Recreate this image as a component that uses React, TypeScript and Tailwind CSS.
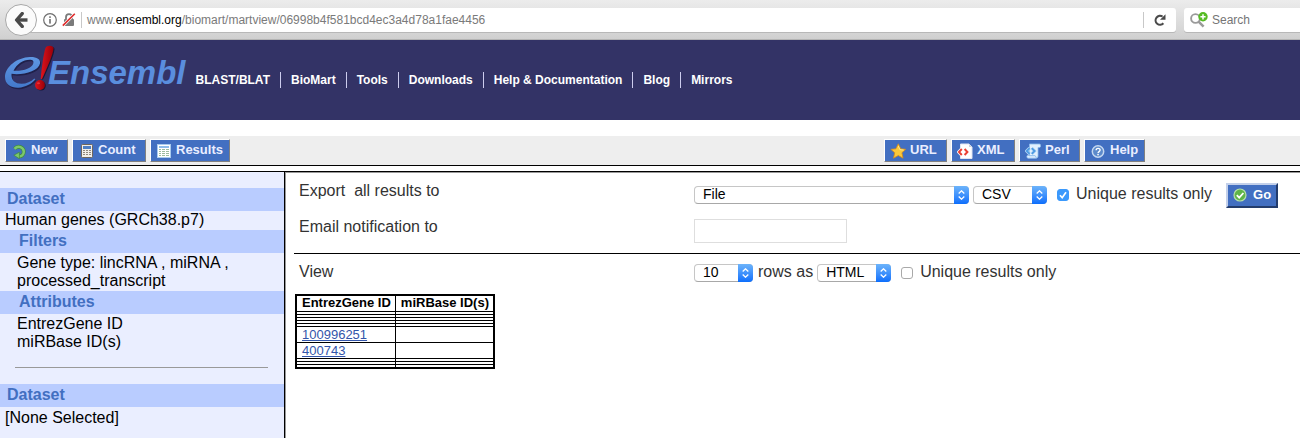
import type { ReactNode } from "react";

function BackIcon() {
  return (
    <svg width="14" height="16" viewBox="0 0 14 16" fill="none" stroke="#4a4a4a" strokeWidth="3.4" aria-hidden="true">
      <path d="M8.2 1.6 2.6 8l5.600 6.400" strokeLinejoin="round" strokeLinecap="round" />
      <path d="M3 8h10.500" />
    </svg>
  );
}

function InfoIcon() {
  return (
    <svg width="14" height="14" viewBox="0 0 14 14" fill="none" aria-hidden="true">
      <circle cx="7" cy="7" r="6.300" stroke="#6e6e6e" strokeWidth="1.200" />
      <rect x="6.200" y="6" width="1.600" height="4.600" fill="#6e6e6e" />
      <rect x="6.200" y="3.300" width="1.600" height="1.600" fill="#6e6e6e" />
    </svg>
  );
}

function LockOffIcon() {
  return (
    <svg width="14" height="14" viewBox="0 0 14 14" fill="none" aria-hidden="true">
      <rect x="2" y="6" width="10" height="7" rx="1" fill="#7b7b7b" />
      <path d="M4 6.500V4.200a3 3 0 0 1 6 0v2.300" stroke="#7b7b7b" strokeWidth="1.800" />
      <path d="M.8 12.600 12.800.8" stroke="#fff" strokeWidth="3" />
      <path d="M.8 12.600 12.800.8" stroke="#e02b2b" strokeWidth="1.600" />
    </svg>
  );
}

function ReloadIcon() {
  return (
    <svg width="12" height="12" viewBox="0 0 12 12" fill="none" aria-hidden="true">
      <path d="M9.400 9.300A4.500 4.500 0 1 1 8.600 2.500" stroke="#4a4a4a" strokeWidth="2.100" />
      <path d="M11.500.2v5.500H6z" fill="#4a4a4a" />
    </svg>
  );
}

function SearchPlusIcon() {
  return (
    <svg width="18" height="16" viewBox="0 0 18 16" fill="none" aria-hidden="true">
      <circle cx="5.500" cy="6.500" r="4.400" stroke="#9a9a9a" strokeWidth="1.900" />
      <path d="m8.600 9.600 5 5" stroke="#9a9a9a" strokeWidth="2.600" />
      <circle cx="13" cy="4.800" r="4.700" fill="#56bb23" />
      <path d="M13 2.200v5.200M10.400 4.800h5.200" stroke="#fff" strokeWidth="1.500" />
    </svg>
  );
}

const swoosh =
  "M6.500 28.800C18 30.500 33.500 26 35 18.500c.8-4.500-3.500-6.700-10-6.500C12 12.400 0 22 0 32c0 7.500 6 11 13.500 10.700 7-.3 13-3.700 16.800-8.400l-1-.8C26 36.600 21.500 38.800 16.500 38.800 10 38.800 6 35.500 6.500 28.800ZM8.500 25.800C11.500 19 18 14.800 24.500 14.700c3.500 0 4.600 1.500 3.700 4C26.800 23 18.500 26.400 8.500 25.800Z";

function EnsemblMark() {
  return (
    <svg width="50" height="48" viewBox="0 0 50 48" aria-hidden="true">
      <defs>
        <linearGradient id="eBlue" x1="0" y1="0" x2="0" y2="1">
          <stop offset="0" stopColor="#5f98e4" />
          <stop offset="1" stopColor="#4379cb" />
        </linearGradient>
        <linearGradient id="bangRed" x1="0" y1="0" x2="1" y2="0">
          <stop offset="0" stopColor="#e0141c" />
          <stop offset="1" stopColor="#98000a" />
        </linearGradient>
      </defs>
      <path fill="#20204a" transform="translate(1 1.500)" fillRule="evenodd" d={swoosh} />
      <path fill="url(#eBlue)" fillRule="evenodd" d={swoosh} />
      <path fill="#181838" d="M42 3.500c1-2.800 7.500-3 7.500.5 0 5-6.500 20-11.500 30.500h-1.500C37.500 24 39.500 9.500 42 3.500Z" />
      <path fill="url(#bangRed)" d="M40.500 3c1-3 8-3.200 8 .3 0 5-6.500 20-11.500 30.700h-1.300C36.500 23.500 38.500 9 40.500 3Z" />
      <circle cx="36" cy="40.800" r="4.800" fill="#181838" />
      <circle cx="35" cy="40" r="4.900" fill="url(#bangRed)" />
      <ellipse cx="33.500" cy="38.300" rx="1.500" ry="1" fill="#e8323a" />
    </svg>
  );
}

function NewIcon() {
  return (
    <svg width="16" height="16" viewBox="0 0 16 16" fill="none" aria-hidden="true">
      <path d="M3.500 5.800C7 2 12.800 4 12.800 8.800c0 3-2.300 4.600-4.800 4.600" stroke="#3f8a3c" strokeWidth="3.800" />
      <path d="M3.500 5.800C7 2 12.800 4 12.800 8.800c0 3-2.300 4.600-4.800 4.600" stroke="#7cc86c" strokeWidth="2.500" />
      <path d="M8.400 9.200v6.600L2.800 12.200z" fill="#7cc86c" stroke="#3f8a3c" strokeWidth=".7" />
    </svg>
  );
}

function CalculatorIcon() {
  return (
    <svg width="16" height="16" viewBox="0 0 16 16" aria-hidden="true">
      <rect x="3.500" y="1.500" width="11" height="13" rx="1" fill="#f1eee8" stroke="#6f665c" />
      <rect x="5" y="3" width="8" height="3" fill="#4e7fc4" />
      {[7, 9, 11].map((y) =>
        [5, 8, 11].map((x) => <rect key={`${x}-${y}`} x={x} y={y} width="2" height="1" fill="#8f877d" />),
      )}
    </svg>
  );
}

function TableIcon() {
  return (
    <svg width="16" height="16" viewBox="0 0 16 16" aria-hidden="true">
      <rect x="1.500" y="1.500" width="13" height="13" fill="#fff" stroke="#a9cbee" />
      <rect x="3" y="3" width="10" height="2" fill="#8fbdea" />
      {[6, 8, 10, 12].map((y) => (
        <g key={y} fill="#9dbb9f">
          <rect x="3" y={y} width="2" height="1" />
          <rect x="6" y={y} width="3" height="1" />
          <rect x="10" y={y} width="3" height="1" />
        </g>
      ))}
    </svg>
  );
}

function StarIcon() {
  return (
    <svg width="16" height="16" viewBox="0 0 16 16" aria-hidden="true">
      <path d="m8.300.8 2.400 5 5 .5-3.800 3.500 1.200 5.400-4.800-2.700L3.500 15.200l1.200-5.400L.8 6.300l5.100-.5z" fill="#fbc93a" stroke="#d58a1c" strokeWidth=".8" />
      <path d="m8.300 2.900 1.600 3.800 3.700.3" fill="none" stroke="#fff0a0" strokeWidth=".8" />
    </svg>
  );
}

function XmlIcon() {
  return (
    <svg width="16" height="16" viewBox="0 0 16 16" fill="none" aria-hidden="true">
      <path d="M3.500 1h8.500l3 3v11.500H3.500z" fill="#fff" stroke="#dfe5f2" />
      <path d="M12 1v3h3" fill="#c9d0dc" />
      <path d="M4.800 6 2 9l2.800 3M7.600 6l2.800 3-2.800 3" stroke="#fff" strokeWidth="3.500" />
      <path d="M4.800 6 2 9l2.800 3M7.600 6l2.800 3-2.800 3" stroke="#ea4035" strokeWidth="2" />
    </svg>
  );
}

function PerlIcon() {
  return (
    <svg width="16" height="16" viewBox="0 0 16 16" fill="none" aria-hidden="true">
      <path d="M4.500 1h10c1.500 0 1.500 3.500 0 3.500H13V13c0 1.500-1 2.200-2 2.200H3c-1.500 0-1.500-3 0-3h1.500z" fill="#e3f0fd" stroke="#8dbdec" strokeWidth=".8" />
      <path d="M4 12.700h6c1 0 .5 2 1.500 2" stroke="#8dbdec" />
      <path d="M4.600 5.200 1.800 8l2.800 2.800M6.800 5.200 9.600 8l-2.800 2.800" stroke="#bcdcf8" strokeWidth="3.200" />
      <path d="M4.600 5.200 1.800 8l2.800 2.800M6.800 5.200 9.600 8l-2.800 2.800" stroke="#4f9be2" strokeWidth="1.900" />
    </svg>
  );
}

function HelpIcon() {
  return (
    <svg width="16" height="16" viewBox="0 0 16 16" fill="none" aria-hidden="true">
      <circle cx="8" cy="8.500" r="5.700" fill="#5c8acb" stroke="#c6d8f0" strokeWidth="1.500" />
      <path d="M6.100 7.200c0-2.500 4-2.400 4-.1 0 1.500-2 1.500-2 2.900" stroke="#fff" strokeWidth="1.400" />
      <rect x="7.300" y="10.800" width="1.500" height="1.500" fill="#fff" />
    </svg>
  );
}

function GoIcon() {
  return (
    <svg width="14" height="14" viewBox="0 0 14 14" fill="none" aria-hidden="true">
      <circle cx="7" cy="7" r="6" fill="#5fb548" stroke="#b7dfa9" strokeWidth="1.200" />
      <path d="m3.800 7.200 2.400 2.400 4.200-4.600" stroke="#fff" strokeWidth="1.800" />
    </svg>
  );
}

function ToolButton({ icon, width, children }: { icon: ReactNode; width: string; children: ReactNode }) {
  return (
    <button
      type="button"
      className={`flex h-[23px] items-center gap-1 border border-t-white border-r-[#808080] border-b-[#808080] border-l-white bg-[#426fc1] pl-[5px] text-[13px] leading-4 font-bold text-[#eaeeff] ${width}`}
    >
      {icon}
      <span className="pb-0.5">{children}</span>
    </button>
  );
}

function Select({ label, options, width }: { label: string; options: string[]; width: string }) {
  return (
    <span className={`relative flex h-[18px] ${width}`}>
      <select
        aria-label={label}
        className="w-full appearance-none rounded-[4px] border border-[#c6c6c6] border-b-[#a8a8a8] bg-white pb-0.5 pl-2 text-[14px] leading-[14px] text-black"
      >
        {options.map((o) => (
          <option key={o}>{o}</option>
        ))}
      </select>
      <span className="pointer-events-none absolute inset-y-0 right-0 flex w-[15px] items-center justify-center rounded-r-[4px] bg-linear-to-b from-[#6cb3fa] to-[#0a6efc]">
        <svg width="7" height="10" viewBox="0 0 7 10" fill="none" stroke="#fff" strokeWidth="1.300" aria-hidden="true">
          <path d="M.7 3.500 3.500.8l2.800 2.700M.7 6.500l2.800 2.700 2.800-2.700" />
        </svg>
      </span>
    </span>
  );
}

function UniqueOnly({ checked }: { checked?: boolean }) {
  return (
    <label className="ml-2.5 flex items-center gap-[7px]">
      <span className="relative flex">
        <input
          type="checkbox"
          defaultChecked={checked}
          className="peer size-3 appearance-none rounded-[3px] border border-[#a9a9a9] bg-white checked:border-[#3b99fc] checked:bg-[#3b99fc]"
        />
        <svg
          width="12"
          height="12"
          viewBox="0 0 12 12"
          fill="none"
          stroke="#fff"
          strokeWidth="1.700"
          className="pointer-events-none absolute inset-0 hidden peer-checked:block"
          aria-hidden="true"
        >
          <path d="m3 6.200 2.200 2.500L9 3.200" />
        </svg>
      </span>
      <span className="pb-0.5">Unique results only</span>
    </label>
  );
}

function SideHeading({ children, nested }: { children: ReactNode; nested?: boolean }) {
  return (
    <h2 className={`bg-[#b9ccff] pt-px pb-0.5 text-[16px] leading-5 font-bold text-[#426fc1] ${nested ? "pl-[19px]" : "pl-[7px]"}`}>
      {children}
    </h2>
  );
}

const navItems = ["BLAST/BLAT", "BioMart", "Tools", "Downloads", "Help & Documentation", "Blog", "Mirrors"];
const rows = ["", "", "", "", "", "100996251", "400743", "", "", ""];

export default function App() {
  return (
    <div className="flex min-h-screen flex-col bg-white font-['Liberation_Sans',Arial,sans-serif] text-black">
      <div className="flex h-10 items-center border-b border-[#b4b4b4] bg-linear-to-b from-[#ececec] to-[#d0d0d0] pl-[5px]">
        <button
          type="button"
          aria-label="Back"
          className="z-10 flex size-8 shrink-0 items-center justify-center rounded-full border border-[#a8a8a8] bg-[#fbfbfb]"
        >
          <BackIcon />
        </button>
        <div className="-ml-2 flex h-6 flex-1 items-center rounded-r-[3px] bg-white pl-[14px] shadow-[0_1px_0_#b8b8b8]">
          <InfoIcon />
          <span className="ml-[5px]">
            <LockOffIcon />
          </span>
          <span className="ml-[5px] h-4 w-px bg-[#c8c8c8]" />
          <p className="ml-[5px] flex-1 text-[12px] leading-4 text-[#7a7a7a]">
            www.<span className="text-black">ensembl.org</span>/biomart/martview/06998b4f581bcd4ec3a4d78a1fae4456
          </p>
          <span className="h-4 w-px bg-[#c8c8c8]" />
          <button type="button" aria-label="Reload" className="flex w-8 justify-center">
            <ReloadIcon />
          </button>
        </div>
        <label className="ml-2 flex h-6 w-[116px] items-center gap-1 rounded-l-[3px] bg-white pl-1.5 shadow-[0_1px_0_#b8b8b8]">
          <SearchPlusIcon />
          <input
            type="text"
            placeholder="Search"
            aria-label="Search"
            className="min-w-0 flex-1 text-[12px] leading-4 outline-none placeholder:text-[#757575]"
          />
        </label>
      </div>

      <header className="flex h-20 items-start bg-[#333366] pt-[5px] pl-[5px]">
        <a href="#home" className="flex items-start">
          <EnsemblMark />
          <span className="-ml-[7px] pt-2.5 text-[33px] leading-9 font-bold text-[#5a8ede] italic">Ensembl</span>
        </a>
        <nav className="mt-[27px] ml-2.5 flex">
          {navItems.map((item) => (
            <a
              key={item}
              href="#nav"
              className="mr-2.5 border-r border-[#ccccee] pr-2.5 text-[12px] leading-4 font-bold text-white last:border-r-0"
            >
              {item}
            </a>
          ))}
        </nav>
      </header>

      <div className="mt-4 flex h-[30px] justify-between border-b border-black bg-[#eeeeee] pt-[3px] pr-[155px] pl-[5px]">
        <div className="flex gap-1">
          <ToolButton width="w-[63px]" icon={<NewIcon />}>New</ToolButton>
          <ToolButton width="w-[74px]" icon={<CalculatorIcon />}>Count</ToolButton>
          <ToolButton width="w-[80px]" icon={<TableIcon />}>Results</ToolButton>
        </div>
        <div className="flex gap-1">
          <ToolButton width="w-[63px]" icon={<StarIcon />}>URL</ToolButton>
          <ToolButton width="w-[64px]" icon={<XmlIcon />}>XML</ToolButton>
          <ToolButton width="w-[61px]" icon={<PerlIcon />}>Perl</ToolButton>
          <ToolButton width="w-[61px]" icon={<HelpIcon />}>Help</ToolButton>
        </div>
      </div>

      <div className="mt-[5px] flex flex-1 border-t border-black">
        <aside className="w-[285px] shrink-0 border-r border-black bg-[#eaeeff] pt-4 text-[16px] leading-[18px]">
          <SideHeading>Dataset</SideHeading>
          <p className="pb-px pl-[5px]">Human genes (GRCh38.p7)</p>
          <SideHeading nested>Filters</SideHeading>
          <p className="pt-px pr-8 pb-px pl-[17px]">Gene type: lincRNA , miRNA , processed_transcript</p>
          <SideHeading nested>Attributes</SideHeading>
          <p className="pt-px pl-[17px]">EntrezGene ID</p>
          <p className="pl-[17px]">miRBase ID(s)</p>
          <hr className="mt-4 mr-4 mb-4 ml-[15px] border-[#999999]" />
          <SideHeading>Dataset</SideHeading>
          <p className="pt-0.5 pl-[5px]">[None Selected]</p>
        </aside>

        <main className="flex-1 border-t border-l border-[#999999] pl-2 text-[16px] leading-[18px] text-[#333333]">
          <div className="grid grid-cols-[395px_1fr] items-center pt-1 pl-[5px]">
            <span className="pb-2 whitespace-pre">Export  all results to</span>
            <div className="flex h-9 items-center">
              <Select label="Export to" options={["File", "Compressed file"]} width="w-[275px]" />
              <span className="ml-1">
                <Select label="Format" options={["CSV", "TSV", "XLS"]} width="w-[74px]" />
              </span>
              <UniqueOnly checked />
              <button
                type="button"
                className="ml-3.5 flex h-[25px] items-center gap-1.5 border-2 border-t-[#c3d0ea] border-r-[#233c6c] border-b-[#233c6c] border-l-[#c3d0ea] bg-[#426fc1] px-[5px] text-[13px] leading-4 font-bold text-white"
              >
                <GoIcon />
                Go
              </button>
            </div>
            <label htmlFor="email" className="pb-2">
              Email notification to
            </label>
            <div className="flex h-9 items-center">
              <input id="email" type="text" className="h-6 w-[153px] border border-[#dedede] bg-white px-1 text-[14px]" />
            </div>
          </div>
          <hr className="mt-1 border-black" />
          <div className="grid grid-cols-[395px_1fr] items-center pl-[5px]">
            <span className="pb-0.5">View</span>
            <div className="flex h-[37px] items-center">
              <Select label="Rows" options={["10", "50", "100"]} width="w-[59px]" />
              <span className="mr-1 ml-[5px] pb-0.5">rows as</span>
              <Select label="View format" options={["HTML", "CSV"]} width="w-[74px]" />
              <UniqueOnly />
            </div>
          </div>
          <table className="mt-[3px] ml-px border-collapse border-2 border-black text-[13px] leading-[14px] text-black">
            <thead>
              <tr>
                <th className="border border-black pt-0 pr-1 pb-px pl-[5px] font-bold">EntrezGene ID</th>
                <th className="border border-black pt-0 pr-1 pb-px pl-[5px] font-bold">miRBase ID(s)</th>
              </tr>
            </thead>
            <tbody>
              {rows.map((id, i) => (
                <tr key={i} className={id ? "h-4" : "h-[3px]"}>
                  <td className="border border-black py-0 pr-1 pl-[5px]">
                    {id && (
                      <a href="#gene" className="text-[#3355aa] underline">
                        {id}
                      </a>
                    )}
                  </td>
                  <td className="border border-black p-0" />
                </tr>
              ))}
            </tbody>
          </table>
        </main>
      </div>
    </div>
  );
}
